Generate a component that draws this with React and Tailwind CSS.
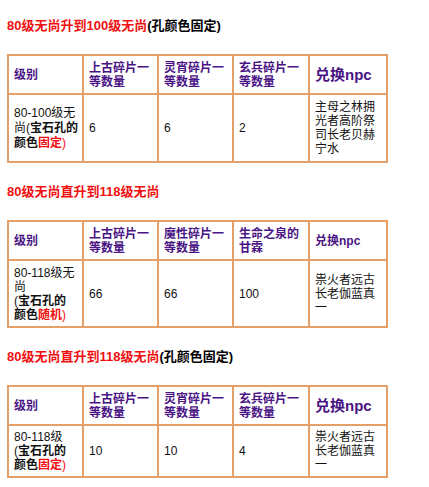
const font = { fontFamily: '"Liberation Sans", "Noto Sans CJK SC", sans-serif' };

function Title({ red, black }) {
  return (
    <div className="h-[14px] text-[13px] leading-[14px] font-bold whitespace-nowrap">
      <span className="text-[#f01010]">{red}</span>
      {black && <span className="text-black">{black}</span>}
    </div>
  );
}

function Th({ children, big }) {
  return (
    <th
      className={
        "border-2 border-[#e5a06a] px-[5px] text-left align-middle font-bold text-[#4a1484] whitespace-nowrap " +
        (big ? "text-[15px] leading-[18px]" : "text-[12px] leading-[14px]")
      }
    >
      {children}
    </th>
  );
}

function Td({ children }) {
  return (
    <td className="border-2 border-[#e5a06a] px-[5px] align-middle text-[12px] leading-[14px] text-[#111] whitespace-nowrap">
      {children}
    </td>
  );
}

function Table({ heads, bigNpc, row, bodyH }) {
  return (
    <table className="ml-[7px] w-[379px] table-fixed border-collapse">
      <colgroup>
        <col className="w-[75px]" />
        <col className="w-[75px]" />
        <col className="w-[75px]" />
        <col className="w-[76px]" />
        <col className="w-[78px]" />
      </colgroup>
      <thead>
        <tr className="h-[39px]">
          <Th>级别</Th>
          {heads.map((h, i) => (
            <Th key={i}>{h}</Th>
          ))}
          <Th big={bigNpc}>兑换npc</Th>
        </tr>
      </thead>
      <tbody>
        <tr className={bodyH}>
          {row.map((c, i) => (
            <Td key={i}>{c}</Td>
          ))}
        </tr>
      </tbody>
    </table>
  );
}

const two = (a, b) => (
  <>
    {a}
    <br />
    {b}
  </>
);

export default function App() {
  return (
    <div className="w-[429px] min-h-[487px] bg-white pt-[19px]" style={font}>
      <div className="pl-[7px]">
        <Title red="80级无尚升到100级无尚" black="(孔颜色固定)" />
      </div>
      <div className="mt-[21px]">
        <Table
          heads={[two("上古碎片一", "等数量"), two("灵宵碎片一", "等数量"), two("玄兵碎片一", "等数量")]}
          bigNpc
          bodyH="h-[68px]"
          row={[
            <div className="leading-[15px]">
              80-100级无
              <br />
              尚(<b>宝石孔的</b>
              <br />
              <b>颜色</b>
              <b className="text-[#f01010]">固定</b>
              <span className="text-[#f01010]">)</span>
            </div>,
            "6",
            "6",
            "2",
            <>
              主母之林拥
              <br />
              光者高阶祭
              <br />
              司长老贝赫
              <br />
              宁水
            </>,
          ]}
        />
      </div>

      <div className="mt-[22px] pl-[7px]">
        <Title red="80级无尚直升到118级无尚" />
      </div>
      <div className="mt-[21px]">
        <Table
          heads={[two("上古碎片一", "等数量"), two("魔性碎片一", "等数量"), two("生命之泉的", "甘霖")]}
          bodyH="h-[67px]"
          row={[
            <>
              80-118级无
              <br />
              尚
              <br />
              (<b>宝石孔的</b>
              <br />
              <b>颜色</b>
              <b className="text-[#f01010]">随机</b>
              <span className="text-[#f01010]">)</span>
            </>,
            "66",
            "66",
            "100",
            <>
              祟火者远古
              <br />
              长老伽蓝真
              <br />
              一
            </>,
          ]}
        />
      </div>

      <div className="mt-[22px] pl-[7px]">
        <Title red="80级无尚直升到118级无尚" black="(孔颜色固定)" />
      </div>
      <div className="mt-[21px]">
        <Table
          heads={[two("上古碎片一", "等数量"), two("灵宵碎片一", "等数量"), two("玄兵碎片一", "等数量")]}
          bigNpc
          bodyH="h-[52px]"
          row={[
            <>
              80-118级
              <br />
              (<b>宝石孔的</b>
              <br />
              <b>颜色</b>
              <b className="text-[#f01010]">固定</b>
              <span className="text-[#f01010]">)</span>
            </>,
            "10",
            "10",
            "4",
            <>
              祟火者远古
              <br />
              长老伽蓝真
              <br />
              一
            </>,
          ]}
        />
      </div>
    </div>
  );
}
